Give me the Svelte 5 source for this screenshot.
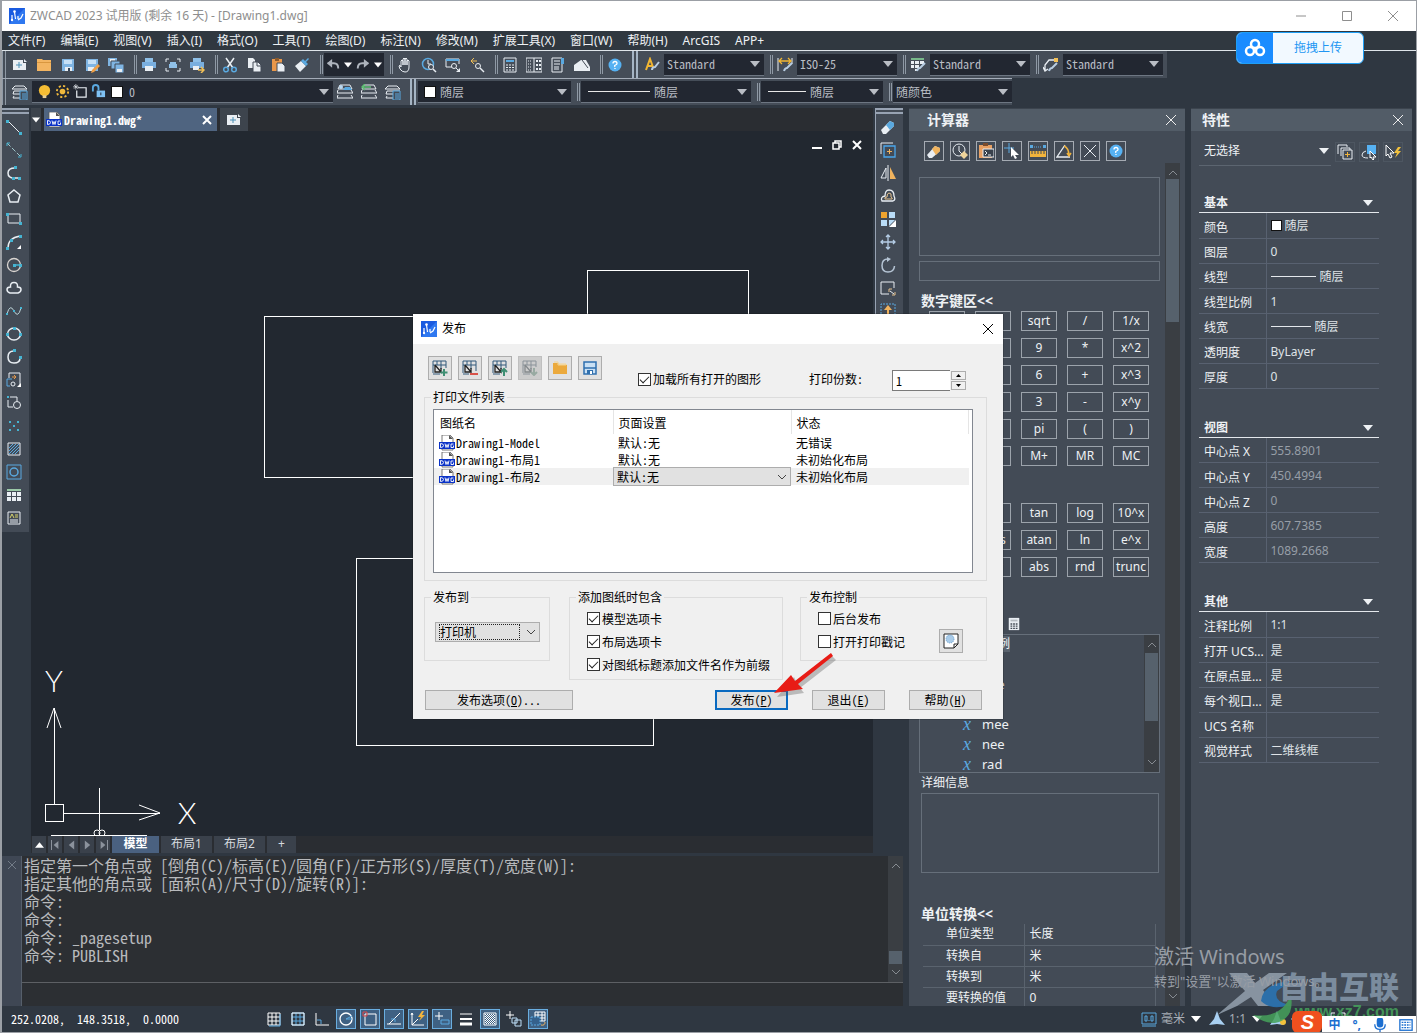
<script lang="ts">
	const W = '#e9eef3';
	const B = '#5aa9e0';
	const C = '#46b4d2';
	const O = '#f0b35e';

	// 16x16 icon bodies
	const icons: Record<string, string> = {
		logo: `<rect width="16" height="16" fill="#1a5be0"/><path d="M0 16L16 0v16z" fill="#2f78f0"/><path d="M3 12V7M5.500 4l1 7M9 11V8M9 12l3-2 2-4" stroke="#fff" stroke-width="1.2"/><circle cx="3" cy="12" r="1.2" fill="#fff"/><circle cx="5.500" cy="3.500" r="1.300" fill="#fff"/>`,
		new: `<path d="M1 3h10v3h3v7H1z" fill="${W}"/><path d="M12 2l3 3h-3z" fill="${W}"/><path d="M7 5v6M4 8h6" stroke="#4b8fb5"/>`,
		open: `<path d="M1 2h5l1 1h8v11H1z" fill="#f3b562"/><path d="M1 5.500h14" stroke="#d9973f"/>`,
		save: `<path d="M2 2h12v12H2z" fill="#7fb4e2"/><path d="M4 3h8v4H4z" fill="#c6e0f6"/><path d="M5 10h7v4H5z" fill="${W}"/><path d="M8 11h2v3H8z" fill="#39475a"/>`,
		saveas: `<path d="M2 2h12v12H2z" fill="#7fb4e2"/><path d="M4 3h8v4H4z" fill="#c6e0f6"/><path d="M4 10h6v4H4z" fill="${W}"/><path d="M8 13l6-6 2 2-6 6-3 1z" fill="#ef9f45"/>`,
		saveall: `<path d="M0 1h9v8H0z" fill="#7fb4e2"/><path d="M2 2h5v3H2z" fill="${W}"/><path d="M3 4h9v8H3z" fill="#7fb4e2" stroke="#434b56"/><path d="M7 7h9v9H7z" fill="#7fb4e2" stroke="#434b56"/><path d="M9 12h5v3H9z" fill="${W}"/>`,
		print: `<path d="M4 1h8v4H4z" fill="#8fc0e8"/><path d="M1 5h14v6H1z" fill="#79aede"/><path d="M4 9h8v5H4z" fill="${W}"/>`,
		preview: `<path d="M1 5V2h3M12 2h3v3M15 11v3h-3M4 14H1v-3" stroke="${W}"/><path d="M5 5h6v2H5zM4 7h8v4H4z" fill="#8fc0e8"/>`,
		plot: `<path d="M4 1h8v4H4z" fill="#8fc0e8"/><path d="M1 5h14v6H1z" fill="#79aede"/><path d="M4 9h6v4H4z" fill="${W}"/><path d="M9 13h5M12 10l3 3-3 3" stroke="#f2c057" stroke-width="1.5"/>`,
		cut: `<path d="M4 1l7 10M12 1L5 11" stroke="${W}" stroke-width="1.5"/><circle cx="4" cy="12.500" r="2.300" stroke="${B}" stroke-width="1.5"/><circle cx="12" cy="12.500" r="2.300" stroke="${B}" stroke-width="1.5"/>`,
		copy: `<path d="M2 1h5l2 2v8H2z" fill="${W}"/><path d="M7 5h5l3 3v7H7z" fill="${W}" stroke="#434b56"/><path d="M11 5v4h4" stroke="#434b56"/>`,
		paste: `<path d="M2 2h10v12H2z" fill="#e9974a"/><path d="M5 1h4v3H5z" fill="#8c5a2c"/><path d="M7 6h5l3 3v6H7z" fill="${W}" stroke="#434b56"/>`,
		match: `<path d="M1 9l6-5 5 5-6 6z" fill="${W}"/><path d="M7 4l2-2 2 2 3-3 1 1-3 3 2 2-2 2z" fill="${B}"/>`,
		undo: `<path d="M2 6h7q5 0 5 6" stroke="#aeb4bd" stroke-width="2.200"/><path d="M7 1v10L1 6z" fill="#aeb4bd"/>`,
		redo: `<path d="M14 6H7q-5 0-5 6" stroke="#aeb4bd" stroke-width="2.200"/><path d="M9 1v10l6-5z" fill="#aeb4bd"/>`,
		pan: `<path d="M4 10V4q1-2 2 0v4V2q1-2 2 0v6V2q1-2 2 0v6-4q1-2 2 0v6q0 5-4 5-3 0-5-3L2 9q1-2 2 1z" stroke="${W}"/>`,
		zoomrt: `<circle cx="7" cy="7" r="5.500" stroke="${B}" stroke-width="1.500"/><path d="M7 3v4h3" stroke="${W}"/><circle cx="10" cy="10" r="2.500" fill="#434b56" stroke="${W}"/><path d="M12 12l3 3" stroke="${W}" stroke-width="1.500"/>`,
		zoomwin: `<path d="M1 10V2h13v5M1 10h6" stroke="${W}"/><path d="M1 3h13" stroke="${B}" stroke-width="2"/><circle cx="9" cy="9" r="2.500" stroke="${W}"/><path d="M11 11l2 2" stroke="${W}"/><path d="M15 11v4h-4z" fill="${W}"/>`,
		zoomprev: `<path d="M2 4h6M5 1L2 4l3 3" stroke="#f2c057"/><circle cx="9" cy="9" r="2.500" stroke="${W}"/><path d="M11 11l4 4" stroke="${W}" stroke-width="1.500"/>`,
		calc: `<path d="M2 1h12v14H2z" stroke="${W}"/><path d="M4 4h8" stroke="${B}" stroke-width="2"/><path d="M4 8h8M4 10.500h8M4 13h8" stroke="${W}" stroke-dasharray="2 1"/>`,
		design: `<path d="M0 1h16v14H0zM8 1v14" stroke="${W}"/><path d="M2 4h4M2 7h4M2 10h4M2 13h4" stroke="${W}" stroke-dasharray="1 1"/><path d="M10 4h5M10 8h5M10 12h5" stroke="${W}" stroke-width="2" stroke-dasharray="2 1"/>`,
		sheet: `<path d="M2 1h10v14H2z" stroke="${W}"/><path d="M11 1h3v6h-3z" fill="${B}"/><path d="M4 4h6M4 7h6M4 10h5M4 12h5" stroke="${W}"/>`,
		markup: `<path d="M0 8l7-5h5l4 7v4H0z" fill="${W}"/><path d="M8 3l6 8" stroke="#434b56"/>`,
		help: `<circle cx="8" cy="8" r="6.500" fill="#56b1f2"/><path d="M6 6.500Q6 4.500 8 4.500T10 6.500Q10 7.500 8.500 8T8 10M8 11v1" stroke="#fff" stroke-width="1.300"/>`,
		textstyle: `<path d="M2 13L6 2l3 8M4 9h4" stroke="#f2b632" stroke-width="2"/><path d="M8 13q0-3 3-3l4-5" stroke="#b8cde2" stroke-width="2"/>`,
		dimstyle: `<path d="M1 1v13M15 1v6" stroke="${W}"/><path d="M2 4h12M5 1L2 4l3 3M11 1l3 3-3 3" stroke="#f2b632" stroke-width="1.300"/><path d="M7 14q1-3 3-3l5-5" stroke="#b8cde2" stroke-width="2"/>`,
		tablestyle: `<path d="M1 1h13v2H1z" fill="#78b88a"/><path d="M1 4h3v3H1zM5 4h4v3H5zM10 4h4v3h-4zM1 8h3v3H1zM5 8h4v3H5zM5 12h2v2H5z" fill="${W}"/><path d="M7 14q1-3 3-3l5-5" stroke="#b8cde2" stroke-width="2"/>`,
		leaderstyle: `<path d="M2 13V8l4-5h5M0 10l2 4 3-2" stroke="${W}" stroke-width="1.300"/><path d="M11 1h4v4h-4z" fill="#f2c057"/><path d="M6 14q1-3 3-3l5-5" stroke="#b8cde2" stroke-width="2"/>`,
		layers: `<path d="M3 2h9l3 3H0zM2 7h13M2 7l-1 3h8M2 12l-1 2h7" stroke="${W}"/><path d="M8 7h7v9H8z" fill="#434b56" stroke="${B}"/><path d="M10 10h4M10 12h4M10 14h4" stroke="${B}"/>`,
		bulb: `<circle cx="8" cy="7" r="6" fill="#f5bd34"/><path d="M6 12h4v3H6z" fill="#e8cf92"/>`,
		sun: `<circle cx="8" cy="8" r="3" fill="#f0b93c"/><circle cx="8" cy="8" r="6" stroke="#f0b93c" stroke-width="2" stroke-dasharray="2.300 2.400"/>`,
		frame: `<path d="M5 4h9v10H4V7" stroke="${W}" stroke-width="1.300"/><path d="M3 0v6M0 3h6M1 1l4 4M5 1L1 5" stroke="${W}" stroke-width=".7"/>`,
		lock: `<path d="M2 8V4q0-3 3-3t3 3v3" stroke="${B}" stroke-width="2"/><path d="M6 7h9v7H6z" fill="#7fc2f5"/><path d="M10 9h1v3h-1z" fill="#222731"/>`,
		layA: `<path d="M3 1h10l2 4H1zM1 6l-1 3h16l-2-3M1 11l-1 3h16l-2-3" stroke="${W}"/><circle cx="4" cy="3" r="2" fill="#b9d8f2"/><path d="M8 3h5l2 3H6z" fill="${B}"/>`,
		layB: `<path d="M3 1h10l2 4H1zM1 6l-1 3h16l-2-3M1 11l-1 3h16l-2-3" stroke="${W}"/><path d="M1 3h9M4 0L1 3l3 3" stroke="#5fbf74" stroke-width="1.500"/>`,
		line: `<path d="M2 2l12 12" stroke="${W}"/><path d="M0 1h3v3H0zM13 13h3v3h-3z" fill="${C}"/>`,
		xline: `<path d="M1 1l13 13" stroke="#9fc4c9" stroke-dasharray="5 2"/><path d="M1 1h3M1 1v3M15 15h-3M15 15v-3" stroke="${C}"/>`,
		pline: `<path d="M9 3Q2 3 2 8t6 5h6" stroke="${W}" stroke-width="1.500"/><path d="M8 1h3v3H8zM6 12h3v3H6zM12 12h3v3h-3z" fill="${C}"/>`,
		polygon: `<path d="M8 2l6 5-2 7H4L2 7z" stroke="${W}" stroke-width="1.500"/>`,
		rect: `<path d="M2 3h12v9H2z" stroke="${W}"/><path d="M0 2h3v3H0zM13 11h3v3h-3z" fill="${C}"/>`,
		arc: `<path d="M2 14Q2 4 14 2" stroke="${W}" stroke-width="1.500"/><path d="M0 13h3v3H0zM4 5h3v3H4zM13 1h3v3h-3z" fill="${C}"/><path d="M15 11v4h-4z" fill="#fff"/>`,
		circle: `<circle cx="8" cy="8" r="6.500" stroke="#d9d4d0" stroke-width="1.300"/><path d="M8 8h6" stroke="${C}" stroke-width="1.500"/><path d="M7 7h3v3H7zM13 7h3v3h-3z" fill="${C}"/>`,
		cloud: `<path d="M4 13q-3-1-3-3.500T4.500 7Q4 2.500 8 2.500T11.500 7Q15 7 15 9.500T12 13z" stroke="${W}" stroke-width="1.500"/>`,
		spline: `<path d="M1 11Q4 0 8 8t7-3" stroke="#bcd3d8"/><path d="M0 10h2v2H0zM7 7h2v2H7zM14 4h2v2h-2z" fill="${C}"/>`,
		ellipse: `<ellipse cx="8" cy="8" rx="6.500" ry="6" stroke="${W}" stroke-width="1.500"/><path d="M0 7h3v3H0zM13 7h3v3h-3zM7 1h3v3H7z" fill="${C}"/>`,
		earc: `<path d="M8 2Q2 2 2 8t6 6q6 0 6-5" stroke="${W}" stroke-width="1.500"/><path d="M7 0h3v3H7zM13 7h3v3h-3z" fill="${C}"/>`,
		block: `<path d="M3 6V1h11v12" stroke="${W}"/><path d="M1 14V7h5M1 14h3" stroke="${B}"/><path d="M6 5h4M8 3l2 2-2 2" stroke="#e59a4c"/><circle cx="7" cy="12" r="2" stroke="${W}"/><path d="M15 11v4h-4z" fill="#fff"/>`,
		mkblock: `<path d="M4 2h7v4M2 5v7h5" stroke="${W}"/><circle cx="11" cy="10" r="3.500" stroke="${W}"/><path d="M1 1h2v2H1z" fill="${C}"/>`,
		point: `<path d="M3 3h2v2H3zM11 3h2v2h-2zM7 7h2v2H7zM3 11h2v2H3zM11 11h2v2h-2z" fill="${C}"/>`,
		hatch: `<path d="M2 2h12v12H2z" stroke="${W}"/><path d="M3 7l4-4M3 10l7-7M3 13L13 3M6 13l7-7M9 13l4-4" stroke="${B}"/>`,
		region: `<path d="M1 1h14v14H1z" stroke="${B}"/><circle cx="8" cy="8" r="4" stroke="${B}" stroke-width="1.500"/>`,
		table: `<path d="M1 2h14v2H1z" fill="#9cc9a8"/><path d="M1 5h4v4H1zM6 5h4v4H6zM11 5h4v4h-4zM1 10h4v4H1zM6 10h4v4H6zM11 10h4v4h-4z" fill="${W}"/>`,
		mtext: `<path d="M2 2h12v12H2z" stroke="${W}"/><path d="M4 8l2-4 2 4M9 5h3M9 7h3" stroke="#d8d36a"/><path d="M4 10h8M4 12h8" stroke="${W}"/>`,
		erase: `<path d="M1 11l9-9 4 2v3l-8 8H3z" fill="${W}"/><path d="M6 6l4-4 4 2v3l-4 4z" fill="${B}"/>`,
		copyobj: `<path d="M1 12V1h12" stroke="${W}"/><path d="M4 4h11v11H4z" stroke="#4aa6ec" stroke-width="1.300"/><path d="M9.500 7v5M7 9.500h5" stroke="${O}"/>`,
		mirror: `<path d="M6 3v10H1z" stroke="${W}"/><path d="M8 0v16" stroke="${W}"/><path d="M10 2v12h6z" fill="${O}"/>`,
		offset: `<path d="M2 13q-2-4 3-5Q5 2 9 2q5 0 5 6 2 4-1 5z" stroke="${W}" stroke-width="1.300"/><path d="M5 11q-1-2 2-2Q7 5 9 5q3 0 2 4 2 1 1 2z" stroke="#e3c08c"/>`,
		array: `<path d="M1 1h6v6H1z" fill="#f0a42e"/><path d="M9 1h6v6H9zM1 9h6v6H1z" fill="#b9dcf7"/><path d="M9 9h6l-6 6z" fill="#b9dcf7"/><path d="M16 9v7H9z" fill="#fff"/>`,
		move: `<path d="M8 1v14M1 8h14M6 3l2-2 2 2M6 13l2 2 2-2M3 6L1 8l2 2M13 6l2 2-2 2" stroke="#b5cde6" stroke-width="1.300"/>`,
		rotate: `<path d="M8 2Q2 2 2 8.500T8 15q6 0 6.500-6" stroke="#b5c4d4" stroke-width="1.500"/><path d="M7 0l4 2-4 3z" fill="#b5c4d4"/>`,
		scale: `<path d="M9 14H1V2h13v6" stroke="${W}"/><path d="M9 9h3M9 9v3M15 12v3h-3" stroke="#e3c08c"/><path d="M10 11l4 3" stroke="${W}"/>`,
		stretch: `<path d="M1 14V1h14v13" stroke="${B}" stroke-dasharray="2 1"/><path d="M8 15V6" stroke="${O}" stroke-width="2"/><path d="M4 7l4-5 4 5z" fill="${O}"/>`,
		trim: `<path d="M2 4h12M8 1v14" stroke="${W}"/>`,
		eraser: `<path d="M1 12l8-9 5 2v3l-8 7H3z" fill="${W}"/><path d="M6 6l3-3 5 2v3l-4 4z" fill="${O}"/>`,
		history: `<circle cx="7" cy="7" r="6" stroke="${W}"/><path d="M7 3v5l3 3" stroke="${W}"/><path d="M8 12l4-4 4 4-4 4z" fill="#efd49b"/>`,
		clip: `<path d="M1 2h13v13H1z" fill="#e8a063"/><path d="M5 0h5v3H5z" fill="#7a4b2c"/><path d="M5 6h11v8H5z" fill="#39414c" stroke="${W}"/><path d="M7 8l2 2-2 2M10 12h3" stroke="${W}"/>`,
		getpt: `<path d="M5 0v10M0 5h10" stroke="${B}"/><path d="M7 4l8 8h-4l2 3-2 1-2-4-2 2z" fill="#fff"/>`,
		ruler: `<path d="M0 2h3v3H0zM13 2h3v3h-3z" fill="${B}"/><path d="M4 4h8" stroke="${B}" stroke-dasharray="1 1"/><path d="M0 8h16v6H0z" fill="#f2b43c"/><path d="M2 8v3M5 8v3M8 8v3M11 8v3M14 8v3" stroke="#434b56"/>`,
		angle: `<path d="M14 14H1L9 2" stroke="${W}" stroke-width="1.300"/><path d="M8 3q5 2 5 10M11 10l2 3 2-3" stroke="#f2b43c" stroke-width="1.500"/>`,
		cross: `<path d="M2 2l12 12M14 2L2 14" stroke="${W}"/>`,
		keypad: `<path d="M2 1h12v14H2z" fill="${W}"/><path d="M4 3h8v2H4z" fill="#b4bac0"/><path d="M4 8h8M4 10.500h8M4 13h8" stroke="#434b56" stroke-width="1.500" stroke-dasharray="2 1"/>`,
		pickadd: `<path d="M1 10V1h9v2" stroke="${W}"/><path d="M4 12V4h9v2" stroke="${W}"/><path d="M6 6h9v9H6z" stroke="${W}"/><path d="M10.500 8v5M8 10.500h5" stroke="#f2b43c"/>`,
		picksel: `<path d="M6 1h9v9H6z" fill="#56b1f2"/><path d="M5 7Q1 8 1 11t6 3" stroke="${W}"/><path d="M9 7l6 6h-3l1 2-1 1-2-3-1 1z" fill="#434b56" stroke="#fff"/>`,
		quick: `<path d="M1 1l8 8H5l2 4-2 1-2-4-2 2z" stroke="#fff"/><path d="M13 3l-4 6h3l-2 5 6-7h-3l3-4z" fill="#f2c13c"/>`,
		sheetadd: `<path d="M1 13V1h13v7M1 5h13M5 1v4M9 1v8M1 14h7" stroke="#30587a"/><path d="M3 5l6 7v-4M3 5v7h6" stroke="#222" stroke-width="1.300"/><path d="M12 9v7M8.500 12.500h7" stroke="#3f8f73" stroke-width="2"/>`,
		sheetdel: `<path d="M1 13V1h13v10M1 5h13M5 1v4M9 1v8M1 14h6" stroke="#30587a"/><path d="M3 5l6 7v-4M3 5v7h6" stroke="#222" stroke-width="1.300"/><path d="M8 14h8" stroke="#d9534a" stroke-width="2"/>`,
		sheetup: `<path d="M1 13V1h13v7M1 5h13M5 1v4M9 1v8M1 14h7" stroke="#30587a"/><path d="M3 5l6 7v-4M3 5v7h6" stroke="#222" stroke-width="1.300"/><path d="M12 9v7M9 12l3-3 3 3" stroke="#3f8f73" stroke-width="2"/>`,
		sheetdown: `<path d="M1 13V1h13v6M1 5h13M5 1v4M9 1v8M1 14h7" stroke="#8a9299"/><path d="M3 5l6 7v-4M3 5v7h6" stroke="#84898c" stroke-width="1.300"/><path d="M12 8v7M9 12l3 3 3-3" stroke="#98aaa2" stroke-width="2"/>`,
		folder: `<path d="M1 3h5l1 2h8v9H1z" fill="#eba93c"/><path d="M2 2h4v3h8v-1H7" stroke="#f5d38e"/>`,
		disk: `<path d="M2 2h12v12H2z" fill="#c9e0f4" stroke="#2f6fae" stroke-width="1.500"/><path d="M2 8h12" stroke="#2f6fae" stroke-width="1.500"/><path d="M5 10h6v4H5z" fill="#2f6fae"/><path d="M8 11h2v3H8z" fill="#fff"/>`,
		stamp: `<path d="M1 1h14v10l-4 4H1z" fill="#fff" stroke="#222"/><path d="M15 11h-4v4z" fill="#fff" stroke="#222"/><circle cx="7" cy="6" r="4" fill="#a9cbe8" stroke="#6a9fce" stroke-dasharray="1 1"/>`,
		dwg: `<path d="M3 0h8l3 3v12H3z" fill="#fff" stroke="#555" stroke-width=".8"/><path d="M10 0v4h4z" fill="#555"/><path d="M0 7h16v7H0z" fill="#0a32c8"/><path d="M1.500 8.500v4q3 0 3-2t-3-2M6 8.500l1 4 1-3 1 3 1-4M14.500 9h-2.500v3.500h2.500v-2" stroke="#fff" stroke-width=".9"/>`,
		grid: `<path d="M2 2h12v12H2zM6 2v12M10 2v12M2 6h12M2 10h12" stroke="#fff"/><path d="M14 3v12H3" stroke="${B}"/>`,
		snap: `<path d="M2 2h12v12H2zM6 2v12M10 2v12M2 6h12M2 10h12" stroke="${B}"/><path d="M2 2h12v12H2z" stroke="#fff"/>`,
		ortho: `<path d="M2 2v12h13" stroke="#fff"/><path d="M3 9h4v4" stroke="${B}"/>`,
		polar: `<circle cx="8" cy="8" r="6" stroke="#fff" stroke-width="1.300"/><path d="M8 8h6M14 5l-6 3" stroke="${B}"/>`,
		osnap: `<path d="M3 3h11v11H3z" stroke="#fff"/><path d="M1 1h4v4H1z" stroke="#e04848"/>`,
		otrack: `<path d="M1 13h14M3 13L14 2" stroke="#fff"/><path d="M5 8h4v3" stroke="${B}"/>`,
		ducs: `<path d="M2 2v12h12M2 14l6-6M1 4l1-2 1 2" stroke="#fff"/><path d="M12 0l-4 6h3l-2 4 6-6h-3l2-4z" fill="#f2b43c"/>`,
		dyn: `<path d="M5 1v8M1 5h8" stroke="#fff"/><path d="M7 9h8v4H7z" stroke="${B}"/>`,
		lwt: `<path d="M2 3h12" stroke="#fff"/><path d="M2 8h12" stroke="#fff" stroke-width="2"/><path d="M2 13h12" stroke="#fff" stroke-width="3"/>`,
		trans: `<path d="M2 2h12v12H2z" stroke="#fff"/><path d="M3 3.500h10M3 5.500h10M3 7.500h10M3 9.500h10M3 11.500h10" stroke="#fff" stroke-dasharray="1 1"/><path d="M4 4.500h9M4 6.500h9M4 8.500h9M4 10.500h9M4 12.500h9" stroke="#fff" stroke-dasharray="1 1"/>`,
		cycle: `<path d="M4 0v8M0 4h8" stroke="#fff"/><path d="M6 7h5v5H6zM9 9h6v6H9z" stroke="#bfe0fa"/>`,
		wspace: `<path d="M5 1h10v9H5zM8 1v9M12 1v9M5 4h10M5 7h10" stroke="#fff"/><path d="M1 6h9v8H1z" fill="#35618c" stroke="${B}" stroke-dasharray="2 1"/><path d="M15 11q0 4-4 3" stroke="${O}"/>`,
		units: `<path d="M1 2h14v11H1zM4 5v5h2V5zM8 9v1M10 5v5h2V5z" stroke="${B}"/><path d="M1 15h14" stroke="${B}"/>`,
		anno: `<path d="M8 0l3 8 5 6-8-1-8 1 5-6z" fill="#a9d0f2"/>`,
		annobulb: `<path d="M7 0l3 8 4 6-7-1-7 1 4-6z" fill="#a9d0f2"/><circle cx="13" cy="11" r="3" fill="#f2c13c"/>`,
		gear: `<circle cx="8" cy="8" r="4" stroke="#a9d0f2" stroke-width="2"/><path d="M8 1v14M1 8h14M3 3l10 10M13 3L3 13" stroke="#a9d0f2"/>`,
		expand: `<path d="M1 5V2h4M11 2h4v3M15 11v3h-4M5 14H1v-3M5 10l6-5" stroke="#fff"/>`,
	};

	const menus = ['文件(F)', '编辑(E)', '视图(V)', '插入(I)', '格式(O)', '工具(T)', '绘图(D)', '标注(N)', '修改(M)', '扩展工具(X)', '窗口(W)', '帮助(H)', 'ArcGIS', 'APP+'];

	const fileTools = [
		['new', 'open', 'save', 'saveas', 'saveall'],
		['print', 'preview', 'plot'],
		['cut', 'copy', 'paste', 'match'],
	];
	const viewTools = [
		['pan', 'zoomrt', 'zoomwin', 'zoomprev'],
		['calc', 'design', 'sheet', 'markup'],
		['help'],
	];
	const styles = [
		{ icon: 'textstyle', value: 'Standard' },
		{ icon: 'dimstyle', value: 'ISO-25' },
		{ icon: 'tablestyle', value: 'Standard' },
		{ icon: 'leaderstyle', value: 'Standard' },
	];

	const drawTools = ['line', 'xline', 'pline', 'polygon', 'rect', 'arc', 'circle', 'cloud', 'spline', 'ellipse', 'earc', 'block', 'mkblock', 'point', 'hatch', 'region', 'table', 'mtext'];
	const modifyTools = ['erase', 'copyobj', 'mirror', 'offset', 'array', 'move', 'rotate', 'scale', 'stretch', 'trim', 'trim', 'trim', 'trim'];

	const calcTools = ['eraser', 'history', 'clip', 'getpt', 'ruler', 'angle', 'cross', 'help'];
	const numKeys = [
		'C', '<--', 'sqrt', '/', '1/x',
		'7', '8', '9', '*', 'x^2',
		'4', '5', '6', '+', 'x^3',
		'1', '2', '3', '-', 'x^y',
		'0', '.', 'pi', '(', ')',
		'=', 'MS', 'M+', 'MR', 'MC',
	];
	const sciKeys = [
		'sin', 'cos', 'tan', 'log', '10^x',
		'asin', 'acos', 'atan', 'ln', 'e^x',
		'r2d', 'd2r', 'abs', 'rnd', 'trunc',
	];
	const variables = ['Phi', 'dee', 'ille', 'mee', 'nee', 'rad'];
	const units = [
		['单位类型', '长度'],
		['转换自', '米'],
		['转换到', '米'],
		['要转换的值', '0'],
	];

	type Prop = { k: string; v: string; mark?: string };
	const props: { title: string; dim?: boolean; rows: Prop[] }[] = [
		{
			title: '基本',
			rows: [
				{ k: '颜色', v: '随层', mark: 'swatch' },
				{ k: '图层', v: '0' },
				{ k: '线型', v: '随层', mark: 'dash' },
				{ k: '线型比例', v: '1' },
				{ k: '线宽', v: '随层', mark: 'dash short' },
				{ k: '透明度', v: 'ByLayer' },
				{ k: '厚度', v: '0' },
			],
		},
		{
			title: '视图',
			dim: true,
			rows: [
				{ k: '中心点 X', v: '555.8901' },
				{ k: '中心点 Y', v: '450.4994' },
				{ k: '中心点 Z', v: '0' },
				{ k: '高度', v: '607.7385' },
				{ k: '宽度', v: '1089.2668' },
			],
		},
		{
			title: '其他',
			rows: [
				{ k: '注释比例', v: '1:1' },
				{ k: '打开 UCS...', v: '是' },
				{ k: '在原点显...', v: '是' },
				{ k: '每个视口...', v: '是' },
				{ k: 'UCS 名称', v: '' },
				{ k: '视觉样式', v: '二维线框' },
			],
		},
	];

	const history = [
		'指定第一个角点或 [倒角(C)/标高(E)/圆角(F)/正方形(S)/厚度(T)/宽度(W)]:',
		'指定其他的角点或 [面积(A)/尺寸(D)/旋转(R)]:',
		'命令:',
		'命令:',
		'命令: _pagesetup',
		'命令: PUBLISH',
	];

	const toggles = [
		{ icon: 'grid', on: false },
		{ icon: 'snap', on: false },
		{ icon: 'ortho', on: false },
		{ icon: 'polar', on: true },
		{ icon: 'osnap', on: true },
		{ icon: 'otrack', on: true },
		{ icon: 'ducs', on: true },
		{ icon: 'dyn', on: true },
		{ icon: 'lwt', on: false },
		{ icon: 'trans', on: true },
		{ icon: 'cycle', on: false },
		{ icon: 'wspace', on: true },
	];

	const dialogTools = ['sheetadd', 'sheetdel', 'sheetup', 'sheetdown', 'folder', 'disk'];
	const sheets = [
		{ name: 'Drawing1-Model', status: '无错误' },
		{ name: 'Drawing1-布局1', status: '未初始化布局' },
		{ name: 'Drawing1-布局2', status: '未初始化布局', selected: true },
	];
	let include = $state([
		{ label: '模型选项卡', on: true },
		{ label: '布局选项卡', on: true },
		{ label: '对图纸标题添加文件名作为前缀', on: true },
	]);
	let loadAll = $state(true);
	let copies = $state('1');
</script>

{#snippet icon(name: string)}
	<svg class="icon" viewBox="0 0 16 16" fill="none" aria-hidden="true">{@html icons[name]}</svg>
{/snippet}

{#snippet tool(name: string)}
	<button class="tool" aria-label={name}>{@render icon(name)}</button>
{/snippet}

{#snippet tri(dir: string)}
	<svg class="tri" viewBox="0 0 10 10" aria-hidden="true">
		<path fill="currentColor" d={dir === 'up' ? 'M0 8l5-6 5 6z' : dir === 'left' ? 'M8 0v10L2 5z' : dir === 'right' ? 'M2 0v10l6-5z' : 'M0 2h10L5 8z'} />
	</svg>
{/snippet}

{#snippet chevron(up: boolean)}
	<svg class="chev" viewBox="0 0 10 10" fill="none" stroke="currentColor" aria-hidden="true"><path d={up ? 'M1 7l4-4 4 4' : 'M1 3l4 4 4-4'} /></svg>
{/snippet}

<div class="app">
	<header class="titlebar">
		{@render icon('logo')}
		<span class="title">ZWCAD 2023 试用版 (剩余 16 天) - [Drawing1.dwg]</span>
		<div class="winbtns">
			<button aria-label="最小化"><svg viewBox="0 0 12 12"><path d="M1 6h10" /></svg></button>
			<button aria-label="最大化"><svg viewBox="0 0 12 12"><path d="M1.500 1.500h9v9h-9z" /></svg></button>
			<button aria-label="关闭"><svg viewBox="0 0 12 12"><path d="M1 1l10 10M11 1L1 11" /></svg></button>
		</div>
	</header>

	<nav class="menubar">
		{#each menus as m}
			<button>{m}</button>
		{/each}
	</nav>

	<div class="bars">
		<div class="bar">
			<span class="grip"></span>
			{#each fileTools as group}
				{#each group as name}{@render tool(name)}{/each}
				<span class="sep"></span>
			{/each}
			<div class="undo">
				{@render icon('undo')}{@render tri('down')}{@render icon('redo')}{@render tri('down')}
			</div>
			<span class="sep"></span>
			{#each viewTools as group, i}
				{#if i}<span class="sep"></span>{/if}
				{#each group as name}{@render tool(name)}{/each}
			{/each}
			<span class="grip wide"></span>
			{#each styles as s, i}
				{#if i}<span class="sep"></span>{/if}
				{@render tool(s.icon)}
				<div class="combo w100">
					<select aria-label={s.icon}><option>{s.value}</option></select>
					{@render tri('down')}
				</div>
			{/each}
			<span class="end"></span>
		</div>

		<div class="bar second">
			<span class="grip"></span>
			{@render tool('layers')}
			<div class="combo layer">
				{#each ['bulb', 'sun', 'frame', 'lock'] as name}{@render icon(name)}{/each}
				<span class="swatch"></span>
				<select aria-label="图层"><option>0</option></select>
				{@render tri('down')}
			</div>
			{@render tool('layA')}{@render tool('layB')}{@render tool('layers')}
			<span class="grip wide"></span>
			<div class="combo color">
				<span class="swatch"></span>
				<select aria-label="颜色"><option>随层</option></select>
				{@render tri('down')}
			</div>
			<span class="sep"></span>
			<div class="combo ltype">
				<span class="rule"></span>
				<select aria-label="线型"><option>随层</option></select>
				{@render tri('down')}
			</div>
			<span class="sep"></span>
			<div class="combo lweight">
				<span class="rule"></span>
				<select aria-label="线宽"><option>随层</option></select>
				{@render tri('down')}
			</div>
			<span class="sep"></span>
			<div class="combo pstyle">
				<select aria-label="打印样式"><option>随颜色</option></select>
				{@render tri('down')}
			</div>
		</div>
	</div>

	<main class="work">
		<div class="left">
			<div class="upper">
				<aside class="tools">
					{#each drawTools as name}<button aria-label={name}>{@render icon(name)}</button>{/each}
				</aside>

				<section class="doc">
					<div class="doctabs">
						<button class="drop" aria-label="图纸列表">{@render tri('down')}</button>
						<div class="doctab">
							{@render icon('dwg')}
							<span>Drawing1.dwg*</span>
							<button aria-label="关闭图纸"><svg viewBox="0 0 10 10"><path d="M1 1l8 8M9 1L1 9" /></svg></button>
						</div>
						<button class="newtab" aria-label="新建图纸">{@render icon('new')}</button>
					</div>

					<div class="canvas">
						<svg class="drawing" fill="none" stroke="#fff" shape-rendering="crispEdges">
							<rect x="556" y="139" width="161" height="200" />
							<rect x="233" y="185" width="240" height="161" />
							<rect x="325" y="427" width="297" height="187" />
							<path d="M23 673V577M32 682h97M14 673h18v17H14z" />
							<path d="M68 657v42M20 704h96" />
							<g shape-rendering="auto">
								<path d="M16 597l7-20 7 20M108 674l21 8-21 7" />
								<circle cx="66" cy="702" r="3" /><circle cx="71" cy="702" r="3" />
							</g>
							<text x="23" y="561">Y</text>
							<text x="156" y="693">X</text>
						</svg>
						<div class="mdi">
							<svg viewBox="0 0 10 10"><path d="M0 8h10" /></svg>
							<svg viewBox="0 0 10 10"><path d="M3 3V1h6v6H7M1 3h6v6H1z" stroke-width="1.500" /></svg>
							<svg viewBox="0 0 10 10"><path d="M1 1l8 8M9 1L1 9" /></svg>
						</div>
					</div>

					<div class="layouts">
						<button class="nav white" aria-label="布局列表">{@render tri('up')}</button>
						<button class="nav first" aria-label="第一个">{@render tri('left')}</button>
						<button class="nav" aria-label="上一个">{@render tri('left')}</button>
						<button class="nav" aria-label="下一个">{@render tri('right')}</button>
						<button class="nav last" aria-label="最后一个">{@render tri('right')}</button>
						<button class="layout active">模型</button>
						<button class="layout">布局1</button>
						<button class="layout">布局2</button>
						<button class="layout add">+</button>
					</div>
				</section>

				<aside class="tools modify">
					{#each modifyTools as name}<button aria-label={name}>{@render icon(name)}</button>{/each}
				</aside>
			</div>

			<section class="command">
				<button class="cmdclose" aria-label="关闭命令行"><svg viewBox="0 0 10 10"><path d="M1 1l8 8M9 1L1 9" /></svg></button>
				<div class="cmdmain">
					<div class="cmdlog">
						<div class="lines">
							{#each history as line}<p>{line}</p>{/each}
						</div>
						<div class="scroll">
							{@render chevron(true)}
							<span class="thumb small"></span>
							{@render chevron(false)}
						</div>
					</div>
					<input aria-label="命令" />
				</div>
			</section>
		</div>

		<section class="panel calc">
			<header><h2>计算器</h2><button aria-label="关闭计算器"><svg viewBox="0 0 12 12"><path d="M1 1l10 10M11 1L1 11" /></svg></button></header>
			<div class="calctools">
				{#each calcTools as name}<button aria-label={name}>{@render icon(name)}</button>{/each}
			</div>
			<div class="calcbody">
				<div class="calccontent">
					<div class="display"></div>
					<input class="entry" aria-label="表达式" />
					<h3>数字键区&lt;&lt;</h3>
					<div class="keys">
						{#each numKeys as k}<button>{k}</button>{/each}
					</div>
					<h3 class="gap">科学&lt;&lt;</h3>
					<div class="keys">
						{#each sciKeys as k}<button>{k}</button>{/each}
					</div>
					<h3 class="gap">变量&lt;&lt;</h3>
					<div class="vartools">
						{#each [1, 2, 3, 4] as n}<button aria-label={'变量工具 ' + n}>{@render icon('keypad')}</button>{/each}
					</div>
					<div class="vars">
						<ul>
							<li class="root"><span>样例</span></li>
							{#each variables as v}<li><i>x</i>{v}</li>{/each}
						</ul>
						<div class="scroll">
							{@render chevron(true)}
							<span class="thumb mid"></span>
							{@render chevron(false)}
						</div>
					</div>
					<p class="detail">详细信息</p>
					<div class="detailbox"></div>
					<h3 class="units">单位转换&lt;&lt;</h3>
					<table class="unittable">
						<tbody>
							{#each units as [k, v]}<tr><th>{k}</th><td>{v}</td></tr>{/each}
						</tbody>
					</table>
				</div>
				<div class="scroll main">
					{@render chevron(true)}
					<span class="thumb big"></span>
					{@render chevron(false)}
				</div>
			</div>
		</section>

		<section class="panel props">
			<header><h2>特性</h2><button aria-label="关闭特性"><svg viewBox="0 0 12 12"><path d="M1 1l10 10M11 1L1 11" /></svg></button></header>
			<div class="selrow">
				<div class="selbox">
					<select aria-label="选择"><option>无选择</option></select>
					{@render tri('down')}
				</div>
				{#each ['pickadd', 'picksel', 'quick'] as name}<button aria-label={name}>{@render icon(name)}</button>{/each}
			</div>
			{#each props as group}
				<div class="group">
					<h3>{group.title}{@render tri('down')}</h3>
					<table class:dim={group.dim}>
						<tbody>
							{#each group.rows as r}
								<tr>
									<th>{r.k}</th>
									<td>{#if r.mark}<span class={r.mark}></span>{/if}{r.v}</td>
								</tr>
							{/each}
						</tbody>
					</table>
				</div>
			{/each}
		</section>
	</main>

	<footer class="status">
		<span class="coords">252.0208,&nbsp; 148.3518,&nbsp; 0.0000</span>
		<div class="toggles">
			{#each toggles as t}<button class:on={t.on} aria-label={t.icon}>{@render icon(t.icon)}</button>{/each}
		</div>
		<div class="statusright">
			{@render icon('units')}<span>毫米</span>{@render tri('down')}
			{@render icon('anno')}<span>1:1</span>{@render tri('down')}
			{@render icon('annobulb')}{@render icon('gear')}{@render icon('gear')}{@render icon('expand')}
		</div>
	</footer>

	<button class="upload">
		<span class="cloud">
			<svg viewBox="0 0 24 24" fill="none" stroke="#fff" stroke-width="2.500" aria-hidden="true">
				<circle cx="12" cy="8" r="4" /><circle cx="7" cy="15" r="4" /><circle cx="17" cy="15" r="4" />
			</svg>
		</span>
		<span class="uptext">拖拽上传</span>
	</button>

	<div class="brand">
		<svg viewBox="0 0 88 56" aria-hidden="true">
			<path d="M12 2h18l8 10L52 2h18L46 19l13 16H41l-7-9-14 9L0 44l28-24z" fill="#93a0ae" />
			<path d="M74 10Q46 12 44 30q10 10 28 4Q56 30 60 20z" fill="#2876b8" />
			<path d="M36 44q28 4 38-20 4 24-16 28-12 0-22-8z" fill="#46a35c" />
		</svg>
		<div>
			<strong>自由互联</strong>
			<small>www.xz7.com</small>
		</div>
	</div>

	<div class="activate">
		<p>激活 Windows</p>
		<p>转到"设置"以激活 Windows。</p>
	</div>

	<div class="ime">
		<span class="sogou">S</span>
		<span class="imebar">
			<b>中</b><b>°,</b>
			<svg viewBox="0 0 16 16" fill="none" stroke="#1c6fd0" stroke-width="1.500" aria-hidden="true"><rect x="5" y="0" width="6" height="10" rx="3" fill="#1c6fd0" /><path d="M2 7q0 6 6 6t6-6M8 13v3" /></svg>
			<svg viewBox="0 0 16 16" fill="none" stroke="#1c6fd0" stroke-width="1.500" aria-hidden="true"><rect x="1" y="2" width="14" height="12" /><path d="M3 5h10M3 8h10M3 11h10" stroke-dasharray="2 1" /></svg>
		</span>
	</div>

	<div class="overlay">
		<div class="dialog" role="dialog" aria-labelledby="dlg-title">
			<header>
				{@render icon('logo')}
				<h1 id="dlg-title">发布</h1>
				<button aria-label="关闭"><svg viewBox="0 0 12 12"><path d="M1 1l10 10M11 1L1 11" /></svg></button>
			</header>

			<div class="dbody">
				<div class="drow">
					<div class="dtools">
						{#each dialogTools as name}
							<button disabled={name === 'sheetdown'} aria-label={name}>{@render icon(name)}</button>
						{/each}
					</div>
					<label class="check load"><input type="checkbox" bind:checked={loadAll} />加载所有打开的图形</label>
					<label class="copies" for="copies">打印份数:</label>
					<input id="copies" class="num" bind:value={copies} />
					<span class="spin">
						<button aria-label="增加">{@render tri('up')}</button>
						<button aria-label="减少">{@render tri('down')}</button>
					</span>
				</div>

				<fieldset class="files">
					<legend>打印文件列表</legend>
					<div class="list">
						<table>
							<thead><tr><th>图纸名</th><th>页面设置</th><th>状态</th></tr></thead>
							<tbody>
								{#each sheets as s}
									<tr class:selected={s.selected}>
										<td><span class="file">{@render icon('dwg')}{s.name}</span></td>
										<td>
											{#if s.selected}
												<div class="dsel cell">
													<select aria-label="页面设置"><option>默认:无</option></select>
													{@render chevron(false)}
												</div>
											{:else}
												默认:无
											{/if}
										</td>
										<td>{s.status}</td>
									</tr>
								{/each}
							</tbody>
						</table>
					</div>
				</fieldset>

				<div class="dgroups">
					<fieldset class="to">
						<legend>发布到</legend>
						<div class="dsel printer">
							<select aria-label="发布到"><option>打印机</option></select>
							{@render chevron(false)}
						</div>
					</fieldset>
					<fieldset class="include">
						<legend>添加图纸时包含</legend>
						<div class="checks">
							{#each include as item}
								<label class="check"><input type="checkbox" bind:checked={item.on} />{item.label}</label>
							{/each}
						</div>
					</fieldset>
					<fieldset class="control">
						<legend>发布控制</legend>
						<div class="inner">
							<div class="checks">
								<label class="check"><input type="checkbox" />后台发布</label>
								<label class="check"><input type="checkbox" />打开打印戳记</label>
							</div>
							<button class="stamp" aria-label="打印戳记设置">{@render icon('stamp')}</button>
						</div>
					</fieldset>
				</div>

				<div class="dbuttons">
					<button class="options">发布选项(<u>O</u>)...</button>
					<button class="primary">发布(<u>P</u>)</button>
					<button>退出(<u>E</u>)</button>
					<button>帮助(<u>H</u>)</button>
				</div>
			</div>

			<svg class="pointer" viewBox="0 0 64 48" aria-hidden="true">
				<path d="M3 43l17-20 3 6L58 2l4 4-36 28 4 5z" fill="#555" opacity=".35" transform="translate(1 2)" />
				<path d="M1 41l17-18 4 6L58 1l2 3-35 28 5 5z" fill="#e81c16" />
			</svg>
		</div>
	</div>
</div>

<style>
	:global(body) { margin: 0; background: #2f3741; }
	:global(*) { box-sizing: border-box; }

	.app {
		position: relative; display: flex; flex-direction: column;
		height: 100vh; min-height: 760px; overflow: hidden;
		border: solid #9b9fa5; border-width: 1px 1px 1px 2px;
		background: #2f3741; color: #eef1f4;
		font: 12px/16px "Noto Sans", "Noto Sans CJK SC", sans-serif;
	}
	button, input, select { font: inherit; color: inherit; margin: 0; padding: 0; border: 0; background: none; border-radius: 0; }
	select { appearance: none; outline: 0; min-width: 0; }
	p, h1, h2, h3, ul { margin: 0; padding: 0; }
	table { border-collapse: collapse; }
	th { font-weight: 400; text-align: left; }
	.icon { width: 16px; height: 16px; flex: none; display: block; }
	.tri { width: 10px; height: 10px; flex: none; display: block; }
	.chev { width: 10px; height: 10px; flex: none; display: block; }

	/* title + menu */
	.titlebar { flex: none; display: flex; align-items: center; height: 30px; padding-left: 7px; background: #fff; color: #8e8e8e; }
	.title { margin-left: 5px; }
	.winbtns { display: flex; margin-left: auto; }
	.winbtns button { width: 46px; height: 30px; display: grid; place-items: center; }
	.winbtns svg { width: 12px; height: 12px; fill: none; stroke: #8e8e8e; }
	.menubar { flex: none; display: flex; gap: 15px; height: 20px; padding: 0 6px; border-bottom: 1px solid #dfe5ea; background: #303840; }
	.menubar button { line-height: 18px; }

	/* toolbars */
	.bars { flex: none; display: flex; flex-direction: column; align-items: flex-start; margin-bottom: 3px; color: #b6bbc2; font-family: "Noto Sans Mono CJK SC", "Liberation Mono", monospace; }
	.bar { display: flex; align-items: center; height: 27px; background: #454d58; }
	.bar.second { border-top: 1px solid #a4acb8; }
	.grip { align-self: stretch; width: 4px; margin-right: 2px; border: solid #8f99a5; border-width: 0 1px; }
	.grip.wide { width: 6px; margin: 0 2px 0 5px; border: solid #a5b4c4; border-width: 0 2px; }
	.sep { align-self: stretch; width: 3px; margin: 4px 0 4px 6px; border: solid #8f99a5; border-width: 0 1px; }
	.tool { width: 24px; height: 24px; display: grid; place-items: center; }
	.undo { display: flex; align-items: center; justify-content: space-around; width: 60px; height: 23px; margin-left: 1px; background: #222731; color: #fff; }
	.undo .icon { width: 14px; height: 14px; }
	.undo .tri { width: 8px; height: 8px; }
	.combo { display: flex; align-items: center; height: 22px; padding: 0 4px 0 3px; background: #222731; border-bottom: 1px solid #6d7682; color: #b9bdc4; }
	.combo select { flex: 1; }
	.w100 { width: 100px; }
	.end { width: 4px; }
	.layer { width: 301px; gap: 3px; padding-left: 5px; }
	.layer .icon { width: 15px; height: 15px; }
	.layer .swatch { margin: 0 3px 0 2px; }
	.swatch { display: inline-block; flex: none; width: 12px; height: 12px; background: #fff; border: 1px solid #111; }
	.color { width: 153px; gap: 4px; padding-left: 6px; }
	.ltype { width: 170px; gap: 4px; padding-left: 7px; margin-left: 1px; }
	.lweight { width: 122px; gap: 4px; padding-left: 7px; margin-left: 1px; }
	.pstyle { width: 119px; margin-left: 1px; }
	.rule { width: 62px; height: 1px; background: #e8e8e8; }
	.lweight .rule { width: 38px; }

	/* workspace */
	.work { flex: 1; min-height: 0; display: flex; gap: 6px; padding-right: 4px; }
	.left { flex: 1; min-width: 0; display: flex; flex-direction: column; gap: 3px; }
	.upper { flex: 1; min-height: 0; display: flex; align-items: stretch; gap: 2px; }
	.tools { flex: none; align-self: flex-start; width: 27px; padding: 5px 0 3px; background: #434b56; border-top: 2px solid #98a3b3; box-shadow: inset 0 2px #434b56, inset 0 4px #98a3b3; }
	.tools button { width: 24px; height: 23px; display: grid; place-items: center; }
	.modify { width: 28px; border-left: 1px solid #98a3b3; }
	.doc { flex: 1; min-width: 0; display: flex; flex-direction: column; background: #222830; }
	.doctabs { flex: none; display: flex; gap: 3px; height: 23px; background: #2a2d32; }
	.drop { width: 10px; background: #3d444d; color: #fff; display: grid; place-items: center; }
	.drop .tri { width: 8px; }
	.doctab { display: flex; align-items: center; gap: 2px; width: 173px; padding: 0 4px 0 2px; background: #4f6480; color: #fff; font: bold 12px/16px "Noto Sans Mono CJK SC", "Liberation Mono", monospace; }
	.doctab button { margin-left: auto; width: 12px; height: 16px; display: grid; place-items: center; }
	.doctab button svg { width: 10px; height: 10px; stroke: #fff; stroke-width: 2; }
	.newtab { width: 28px; background: #3d444d; display: grid; place-items: center; }
	.canvas { flex: 1; min-height: 0; position: relative; }
	.drawing { position: absolute; width: 100%; height: 100%; }
	.drawing text { font: 300 30px Lato, sans-serif; fill: #fff; stroke: none; text-anchor: middle; }
	.mdi { display: flex; justify-content: flex-end; gap: 10px; padding: 9px 11px 0; }
	.mdi svg { width: 10px; height: 10px; fill: none; stroke: #fff; stroke-width: 2; }
	.layouts { flex: none; display: flex; gap: 2px; height: 17px; padding-left: 1px; background: #2a2d32; color: #d6dade; }
	.nav { display: grid; place-items: center; width: 14px; background: #3a414b; color: #8b929c; }
	.nav .tri { width: 9px; }
	.nav.first .tri { border-left: 1px solid; }
	.nav.last .tri { border-right: 1px solid; }
	.nav.white { color: #fff; }
	.layout { width: 51px; padding-bottom: 2px; background: #3a414b; line-height: 14px; }
	.layout.active { width: 47px; background: #4a6180; color: #fff; font-weight: 700; }
	.layout.add { width: 29px; }

	/* command line */
	.command { flex: none; display: flex; height: 150px; background: #2c2f33; }
	.cmdclose { width: 20px; background: #3f4754; display: flex; justify-content: center; padding-top: 4px; border-right: 1px solid #565f6b; }
	.cmdclose svg { width: 10px; height: 10px; stroke: #737c88; }
	.cmdmain { flex: 1; display: flex; flex-direction: column; color: #b8babd; font: 16px/18px "Noto Sans Mono CJK SC", "Liberation Mono", monospace; }
	.cmdlog { flex: 1; display: flex; border-bottom: 1px solid #5d6064; }
	.lines { flex: 1; padding-left: 2px; }
	.cmdmain input { height: 23px; padding: 0 2px; outline: 0; }
	.scroll { display: flex; flex-direction: column; align-items: center; justify-content: space-between; width: 15px; padding: 5px 0; background: #3a3e43; color: #878c92; }
	.thumb { width: 13px; background: #56616c; }
	.thumb.small { height: 13px; margin-top: auto; margin-bottom: 3px; }
	.thumb.mid { height: 68px; margin: 3px 0 auto; }
	.thumb.big { height: 143px; margin: 1px 0 auto; }

	/* side panels */
	.panel { flex: none; display: flex; flex-direction: column; overflow: hidden; background: #434b56; }
	.panel header { flex: none; display: flex; align-items: center; justify-content: space-between; height: 23px; padding: 0 8px 0 18px; background: #525c67; border-top: 1px solid #3c444e; }
	.panel header button { width: 12px; height: 12px; display: grid; }
	.panel header svg { width: 12px; height: 12px; stroke: #eee; }
	.panel h2 { font-size: 14px; line-height: 20px; }
	.calc { width: 276px; }
	.calctools { flex: none; display: flex; gap: 6px; padding: 10px 0 2px 15px; }
	.calctools button { width: 20px; height: 20px; display: grid; place-items: center; border: 1px solid #a5abb3; }
	.calcbody { flex: 1; min-height: 0; display: flex; justify-content: space-between; padding-right: 5px; }
	.calccontent { width: 251px; padding: 14px 0 0 10px; overflow: hidden; }
	.display { height: 79px; border: 1px solid #666f7a; }
	.entry { display: block; width: 100%; height: 20px; margin: 5px 0 10px; border: 1px solid #666f7a; }
	.calc h3 { padding-left: 2px; font-size: 14px; line-height: 20px; }
	.calc h3.gap { margin-top: 17px; }
	.calc h3.units { margin-top: 31px; }
	.keys { display: grid; grid-template-columns: repeat(5, 36px); gap: 7px 10px; padding-left: 10px; }
	.keys button { height: 20px; border: 1px solid #9ca3ab; line-height: 16px; white-space: nowrap; }
	.vartools { display: flex; gap: 6px; padding-left: 7px; height: 20px; }
	.vartools button { width: 20px; height: 20px; display: grid; place-items: center; }
	.vartools .icon { width: 14px; height: 14px; }
	.vars { display: flex; height: 139px; border: 1px solid #666f7a; overflow: hidden; }
	.vars ul { flex: 1; list-style: none; }
	.vars li { display: flex; align-items: center; height: 20px; padding: 0 0 2px 43px; font-size: 13px; }
	.vars i { width: 19px; color: #5aa9e0; font: italic 18px/14px "Liberation Serif", serif; }
	.vars .root { padding-left: 66px; }
	.vars .root span { background: #5a636e; font-size: 12px; }
	.detail { padding-left: 2px; line-height: 20px; }
	.detailbox { height: 80px; margin: 0 1px 0 2px; border: 1px solid #666f7a; }
	.unittable { width: 233px; margin: 0 0 0 4px; table-layout: fixed; border-right: 1px solid #5a636e; }
	.unittable tr { height: 21px; border-bottom: 1px solid #5a636e; }
	.unittable th { width: 101px; padding: 0 0 0 23px; border-right: 1px solid #5a636e; }
	.unittable td { padding: 0 0 0 5px; }

	.props { width: 221px; }
	.props header { padding: 0 8px 0 11px; }
	.selrow { display: flex; align-items: center; gap: 4px; height: 35px; margin-bottom: 22px; padding: 6px 0 0 8px; }
	.selbox { display: flex; align-items: center; width: 132px; height: 28px; padding: 0 2px 0 5px; border-bottom: 1px solid #5c6570; }
	.selbox select { flex: 1; }
	.selrow button { width: 20px; height: 20px; display: grid; place-items: center; border: 1px solid #4d5661; }
	.group { width: 180px; margin: 0 0 24px 8px; }
	.group h3 { display: flex; align-items: center; justify-content: space-between; height: 25px; padding: 6px 6px 0 5px; border-bottom: 1px solid #e4e8ec; font-size: 12px; }
	.group table { width: 100%; table-layout: fixed; }
	.group tr { height: 25px; border-bottom: 1px solid #586170; }
	.group th { width: 67px; padding: 5px 0 0 5px; border-right: 1px solid #586170; white-space: nowrap; }
	.group td { padding: 2px 0 0 4px; color: #dfe3e7; white-space: nowrap; }
	.group .dim td { color: #979ea7; }
	.group .swatch { width: 11px; height: 11px; margin-right: 3px; vertical-align: -1px; }
	.dash { display: inline-block; width: 45px; height: 1px; margin-right: 4px; background: #e4e8ec; vertical-align: 4px; }
	.dash.short { width: 40px; }

	/* status bar */
	.status { flex: none; display: flex; align-items: center; height: 26px; padding-left: 9px; }
	.coords { width: 250px; color: #fff; font-family: "Noto Sans Mono CJK SC", "Liberation Mono", monospace; }
	.toggles { display: flex; gap: 4px; padding-left: 3px; }
	.toggles button { width: 20px; height: 20px; display: grid; place-items: center; border: 1px solid transparent; }
	.toggles .on { background: #3f6183; border-color: #6aaee0; }
	.statusright { display: flex; align-items: center; gap: 4px; margin-left: auto; padding-right: 70px; color: #a7adb5; }
	.statusright .tri { color: #fff; margin: 0 4px 0 2px; }

	/* floating bits */
	.upload { position: absolute; top: 31px; right: 52px; display: flex; width: 128px; height: 32px; overflow: hidden; border: 1px solid #1f9ff5; border-radius: 6px; background: #f2f9ff; color: #2196f3; }
	.cloud { width: 36px; height: 30px; display: grid; place-items: center; background: #1a8cff; }
	.cloud svg { width: 24px; height: 24px; }
	.uptext { flex: 1; line-height: 30px; }
	.activate { position: absolute; right: 68px; bottom: 42px; width: 194px; color: #979da5; white-space: nowrap; }
	.activate p { font-size: 13px; line-height: 18px; }
	.activate p:first-child { font-size: 20px; line-height: 30px; }
	.brand { position: absolute; right: 17px; bottom: 5px; display: flex; opacity: .85; }
	.brand svg { width: 88px; height: 56px; margin-right: -26px; }
	.brand div { position: relative; display: flex; flex-direction: column; align-items: flex-end; }
	.brand strong { font-size: 30px; line-height: 32px; font-weight: 900; color: #8598ab; }
	.brand small { font: bold 16px/18px "Liberation Sans", sans-serif; color: #46a35c; }
	.ime { position: absolute; right: -1px; bottom: -1px; display: flex; align-items: flex-end; }
	.sogou { width: 30px; height: 22px; background: #f0501e; border-radius: 6px; color: #fff; font: italic bold 20px/22px "Liberation Sans", sans-serif; text-align: center; }
	.imebar { display: flex; align-items: center; gap: 12px; height: 17px; padding: 0 4px 0 6px; background: #fff; color: #1c6fd0; font-size: 12px; }
	.imebar svg { width: 14px; height: 14px; }

	/* publish dialog */
	.overlay { position: absolute; inset: 0 2px 0 0; display: grid; place-items: center; pointer-events: none; }
	.dialog { position: relative; width: 590px; pointer-events: auto; background: #f0f0f0; color: #000; font: 12px/16px "Noto Sans Mono CJK SC", "Liberation Mono", monospace; box-shadow: 0 0 1px #111; }
	.dialog header { display: flex; align-items: center; height: 30px; padding: 0 9px 0 8px; background: #fff; }
	.dialog h1 { flex: 1; margin-left: 5px; font: 12px/16px "Noto Sans", "Noto Sans CJK SC", sans-serif; }
	.dialog header button { width: 12px; height: 12px; display: grid; }
	.dialog header button svg { width: 12px; height: 12px; stroke: #000; }
	.dbody { padding: 12px 16px 9px 11px; }
	.drow { display: flex; align-items: flex-end; height: 35px; padding-left: 4px; }
	.dtools { display: flex; gap: 6px; align-self: flex-start; }
	.dtools button, .stamp { width: 24px; height: 24px; display: grid; place-items: center; background: #e1e1e1; border: 1px solid #adadad; }
	.dtools button:disabled { background: #ccc; border-color: #bfbfbf; }
	.check { display: flex; align-items: center; gap: 2px; white-space: nowrap; }
	.check input { appearance: none; flex: none; width: 13px; height: 13px; background: #fff; border: 1px solid #333; display: grid; place-items: center; }
	.check input:checked::after { content: ''; width: 8px; height: 4px; border: solid #222; border-width: 0 0 1px 1px; transform: translateY(-1px) rotate(-45deg); }
	.load { margin: 0 0 4px 36px; width: 171px; }
	.copies { width: 83px; margin-bottom: 4px; }
	.num { width: 58px; height: 21px; padding: 0 3px; background: #fff; border: 1px solid #7a7a7a; border-right: 0; outline: 0; }
	.spin { display: flex; flex-direction: column; gap: 1px; height: 19px; margin: 0 0 1px 1px; }
	.spin button { width: 15px; height: 9px; display: grid; place-items: center; background: #f0f0f0; border: 1px solid #adadad; }
	.spin .tri { width: 5px; height: 5px; }
	fieldset { min-width: 0; margin: 0; padding: 0 0 0 6px; border: 1px solid #dcdcdc; }
	legend { height: 12px; padding: 0 2px; line-height: 12px; }
	.files { padding: 6px 13px 7px 6px; }
	.list { height: 164px; margin-left: 2px; border: 1px solid #828790; background: #fff; overflow: hidden; }
	.list table { width: 535px; table-layout: fixed; }
	.list th { height: 24px; padding: 2px 0 0 5px; border-right: 1px solid #e5e5e5; }
	.list th:nth-child(1) { width: 179px; padding-left: 6px; }
	.list th:nth-child(2) { width: 178px; }
	.list td { height: 17px; padding: 0 0 0 5px; line-height: 17px; }
	.list .selected { background: #f0f0f0; }
	.file { display: flex; align-items: center; gap: 1px; }
	.dsel { display: flex; align-items: center; background: #e1e1e1; border: 1px solid #adadad; padding: 0 3px; }
	.dsel select { flex: 1; }
	.dsel .chev { color: #444; }
	.cell { height: 19px; margin: -1px 0 -1px -5px; }
	.dgroups { display: flex; align-items: flex-start; height: 89px; margin-top: 10px; }
	.to { width: 126px; height: 70px; margin-right: 19px; }
	.printer { height: 20px; margin: 19px 9px 0 4px; }
	.printer select { height: 16px; margin-right: 6px; border: 1px dotted #222; line-height: 14px; }
	.checks { padding: 4px 0 0 11px; }
	.checks .check { height: 23px; }
	.include { width: 214px; height: 89px; margin-right: 17px; }
	.control { width: 187px; height: 70px; }
	.control .inner { display: flex; align-items: flex-end; justify-content: space-between; padding-right: 23px; }
	.dbuttons { display: flex; align-items: center; gap: 24px; height: 20px; margin-top: 10px; padding-left: 1px; }
	.dbuttons button { width: 73px; height: 20px; background: #e1e1e1; border: 1px solid #adadad; line-height: 16px; }
	.dbuttons .options { width: 148px; margin-right: auto; }
	.dbuttons .primary { border: 2px solid #0a6ac0; line-height: 14px; }
	.dbuttons button:last-child { margin-right: 5px; }
	.pointer { position: absolute; left: 360px; top: 338px; width: 64px; height: 48px; }
</style>
